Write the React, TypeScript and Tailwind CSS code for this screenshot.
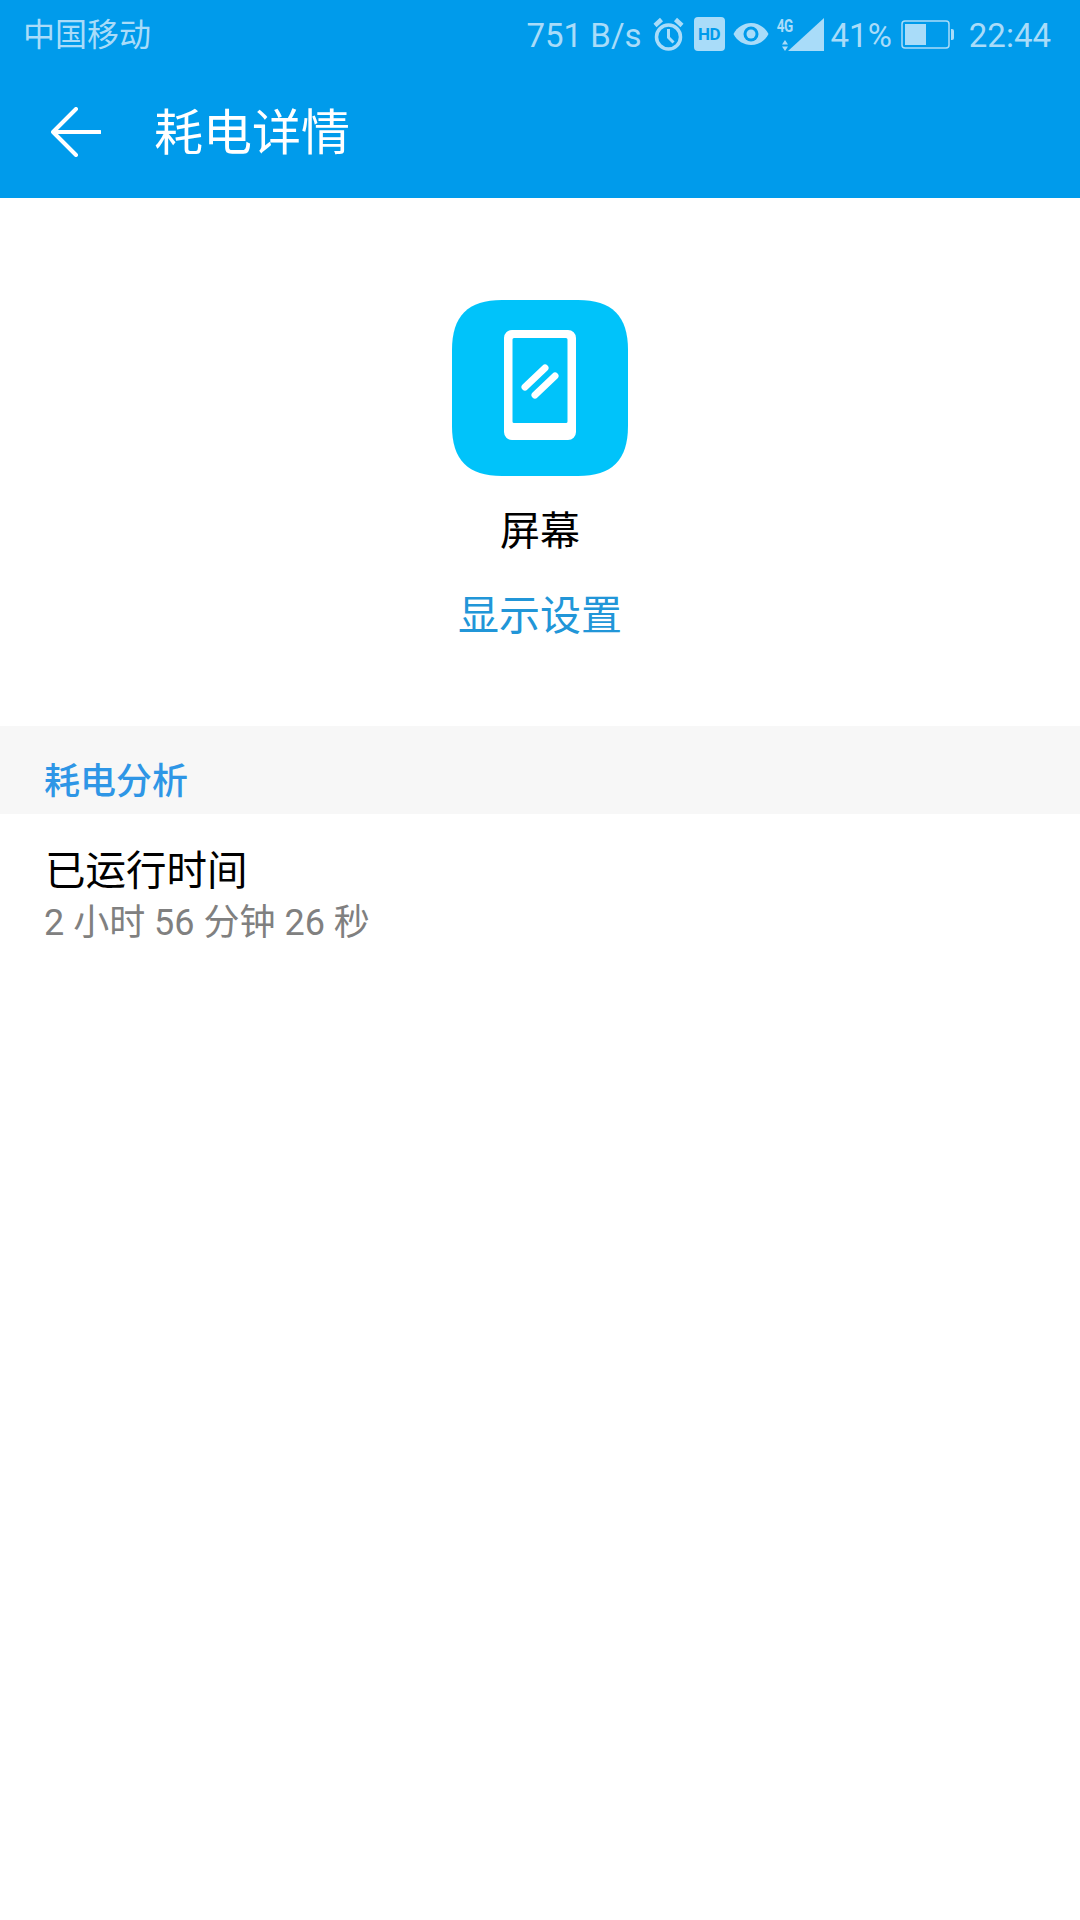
const sans = "font-['Roboto','Noto_Sans_CJK_SC',sans-serif]";

function StatusIcons() {
  return (
    <div className="flex items-center text-[#a9dcf9] text-[33px] leading-none">
      <span>751 B/s</span>
      {/* alarm */}
      <svg className="ml-[11px] -mt-[2px]" width="31" height="34" viewBox="0 0 31 34" fill="none" stroke="currentColor">
        <circle cx="15.500" cy="20" r="12" strokeWidth="3.500" />
        <path d="M15.500 12v8.500l5 5" strokeWidth="3" />
        <path d="M2 8.500l6.500-6M29 8.500l-6.500-6" strokeWidth="4.500" />
      </svg>
      {/* HD */}
      <div className="ml-[10px] -mt-[2px] w-[31px] h-[34px] rounded-[4px] bg-[#a9dcf9] flex items-center justify-center text-[#009beb] text-[17px] font-bold tracking-[-0.5px]">
        HD
      </div>
      {/* eye */}
      <svg className="ml-[8px] -mt-[2px]" width="36" height="24" viewBox="0 0 36 24">
        <path d="M0.500 12C4 5 11 1 18 1S32 5 35.500 12C32 19 25 23 18 23S4 19 0.500 12z" fill="currentColor" />
        <circle cx="18" cy="12" r="7.500" fill="#009beb" />
        <circle cx="18" cy="12" r="4.500" fill="currentColor" />
      </svg>
      {/* 4G + signal */}
      <div className="ml-[8px] -mt-[2px] w-[16px] h-[34px] flex flex-col items-center justify-between self-center">
        <span className="text-[18px] font-bold leading-[18px] tracking-[-0.5px] scale-x-75">4G</span>
        <svg width="6" height="11" viewBox="0 0 6 11" fill="currentColor">
          <path d="M3 0l3 4.500H0zM3 11L0 6.500h6z" />
        </svg>
      </div>
      <svg className="-ml-[5px] -mt-[2px]" width="36" height="33" viewBox="0 0 36 33" fill="currentColor">
        <path d="M36 0v33H0z" />
      </svg>
      <span className="ml-[7px]">41%</span>
      {/* battery */}
      <svg className="ml-[9px] -mt-[1px]" width="53" height="29" viewBox="0 0 53 29" fill="none">
        <rect x="1" y="1" width="47" height="27" rx="3" stroke="currentColor" strokeWidth="1.500" />
        <rect x="4" y="4" width="21" height="21" fill="currentColor" />
        <path d="M50 9h1a2 2 0 0 1 2 2v7a2 2 0 0 1-2 2h-1z" fill="currentColor" />
      </svg>
      <span className="ml-[15px]">22:44</span>
    </div>
  );
}

export default function App() {
  return (
    <div className={`w-[1080px] h-[1920px] bg-white ${sans}`}>
      {/* Header */}
      <div className="h-[198px] bg-[#009beb]">
        <div className="h-[70px] pl-[23px] pr-[29px] flex items-center justify-between">
          <span className="text-[#a9dcf9] text-[32px] leading-none">中国移动</span>
          <StatusIcons />
        </div>
        <div className="h-[124px] flex items-center">
          <svg className="ml-[51px]" width="50" height="50" viewBox="0 0 50 50" fill="none" stroke="#fff" strokeWidth="4" strokeLinecap="round" strokeLinejoin="round">
            <path d="M25 2L2 25l23 23M2 25h47" />
          </svg>
          <span className="ml-[53px] mt-[3px] text-white text-[49px] leading-none">耗电详情</span>
        </div>
      </div>

      {/* Item */}
      <div className="h-[528px] flex flex-col items-center pt-[102px]">
        <svg width="176" height="176" viewBox="0 0 176 176" fill="none">
          <path d="M50 0H126C160 0 176 16 176 50V126C176 160 160 176 126 176H50C16 176 0 160 0 126V50C0 16 16 0 50 0z" fill="#00c3fa" />
          <path d="M60 30H116a8 8 0 0 1 8 8V132a8 8 0 0 1-8 8H60a8 8 0 0 1-8-8V38a8 8 0 0 1 8-8zM62 38a1.500 1.500 0 0 0-1.500 1.500V121.500a1.500 1.500 0 0 0 1.500 1.500H114a1.500 1.500 0 0 0 1.500-1.500V39.500a1.500 1.500 0 0 0-1.500-1.500z" fill="#fff" fillRule="evenodd" />
          <path d="M93 68L73 87M103 76L83 95" stroke="#fff" strokeWidth="7" strokeLinecap="round" />
        </svg>
        <div className="mt-[32px] text-[40px] leading-[48px] text-black">屏幕</div>
        <div className="mt-[36px] text-[41px] leading-[48px] text-[#2196d8]">显示设置</div>
      </div>

      {/* Section */}
      <div className="h-[88px] bg-[#f7f7f7] pl-[44px] pt-[34px]">
        <div className="text-[36px] leading-[44px] font-medium text-[#2e96e6]">耗电分析</div>
      </div>
      <div className="pl-[45px] pt-[32px]">
        <div className="text-[40.500px] leading-[50px] text-black">已运行时间</div>
        <div className="-ml-px mt-[5px] text-[36px] leading-[44px] text-[#808080]">2 小时 56 分钟 26 秒</div>
      </div>
    </div>
  );
}
